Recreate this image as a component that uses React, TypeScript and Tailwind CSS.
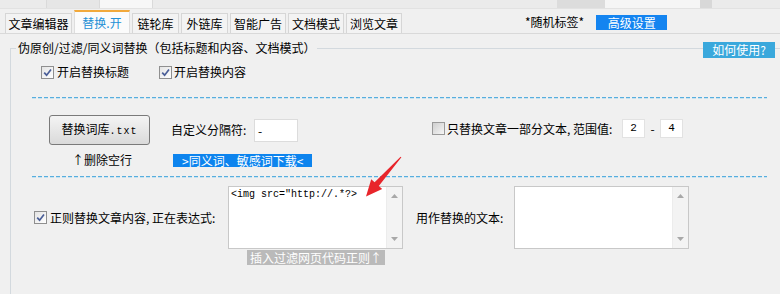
import React from 'react';

const Check = ({ checked }: { checked?: boolean }) => (
  <span
    className={`w-[13px] h-[13px] shrink-0 flex items-center justify-center border ${
      checked ? 'border-[#8f8f8f] bg-linear-to-br from-[#e4e4e4] to-white' : 'border-[#9a9a9a] bg-linear-to-br from-[#cfcfcf] to-[#f6f6f6]'
    }`}
  >
    {checked && (
      <svg width="9" height="9" viewBox="0 0 9 9">
        <path d="M1.2 4.6 L3.6 7.2 L8 1.4" stroke="#4b5f98" strokeWidth="1.7" fill="none" />
      </svg>
    )}
  </span>
);

const Dashed = ({ className }: { className: string }) => (
  <div className={`${className} ml-[21px] w-[735px] h-[2px] flex flex-col`}>
    <div className="h-px bg-[repeating-linear-gradient(90deg,#58aede_0_4px,transparent_4px_6px)]" />
    <div className="h-px bg-[repeating-linear-gradient(90deg,#c6e2f0_0_4px,transparent_4px_6px)]" />
  </div>
);

const TextBox = ({ text }: { text?: string }) => (
  <div className="w-[175px] h-[63px] flex bg-white border border-[#c8c8c8]">
    <div className="flex-1 px-[2px] pt-[1px] font-['Liberation_Mono',monospace] text-[10px] leading-[13px] text-black whitespace-pre">
      {text}
    </div>
    <div className="w-[16px] bg-[#f3f3f3] border-l border-[#ececec] flex flex-col items-center justify-between py-[7px]">
      <svg width="7" height="4" viewBox="0 0 7 4"><path d="M0 4 L3.5 0 L7 4 Z" fill="#a8a8a8" /></svg>
      <svg width="7" height="4" viewBox="0 0 7 4"><path d="M0 0 L3.5 4 L7 0 Z" fill="#a8a8a8" /></svg>
    </div>
  </div>
);

const tabs = [
  { label: '文章编辑器', w: 'w-[67px]' },
  { label: '替换.开', w: 'w-[56px]', active: true },
  { label: '链轮库', w: 'w-[47px]' },
  { label: '外链库', w: 'w-[47px]' },
  { label: '智能广告', w: 'w-[56px]' },
  { label: '文档模式', w: 'w-[56px]' },
  { label: '浏览文章', w: 'w-[56px]' },
];

export default function App() {
  return (
    <div className="relative w-[780px] h-[294px] overflow-hidden bg-[#f0f0f0] text-black text-[12px] font-['Noto_Sans_CJK_SC',sans-serif]">
      {/* top strip from the window above */}
      <div className="h-[9px] flex bg-[#ebebeb] border-b border-[#e2e2e2]">
        <div className="w-[47px] border-r border-[#dadada]" />
        <div className="w-[53px] bg-[#e6e6e6] border-r border-[#dadada]" />
        <div className="w-[53px] bg-[#f7f7f7] border-r border-[#dadada]" />
        <div className="w-[404px]" />
        <div className="w-[48px] bg-[#dcdcdc]" />
        <div className="w-[95px] bg-[#f5f5f5]" />
        <div className="w-[12px] bg-[#d8d8d8]" />
      </div>

      {/* tab row */}
      <div className="h-[25px] flex items-end border-b border-[#d9d9d9]">
        <div className="flex items-end gap-[2px] pl-[5px]">
          {tabs.map(t =>
            t.active ? (
              <div
                key={t.label}
                className={`${t.w} h-[23px] flex items-center justify-center bg-[#fbfbfb] border-t-2 border-[#f2a93b] border-x border-x-[#dedede] text-[#2390d6] leading-[16px]`}
              >
                {t.label}
              </div>
            ) : (
              <div
                key={t.label}
                className={`${t.w} h-[20px] flex items-center justify-center bg-[#f3f3f3] border border-b-0 border-[#d6d6d6] leading-[16px]`}
              >
                {t.label}
              </div>
            )
          )}
        </div>
        <div className="flex items-center h-[20px] mb-[1px]">
          <span className="ml-[123px] leading-[16px]">*随机标签*</span>
          <span className="ml-[12px] w-[71px] h-[15px] bg-[#1484f0] text-white flex items-center justify-center leading-[15px]">
            高级设置
          </span>
        </div>
      </div>

      {/* group box */}
      <fieldset className="mt-[6px] ml-[10px] w-[790px] h-[260px] border border-[#d3d9de] p-0">
        <legend className="ml-[5px] px-[2px] leading-[16px]">伪原创/过滤/同义词替换（包括标题和内容、文档模式）</legend>

        {/* row 1 */}
        <div className="mt-[8px] h-[16px] flex items-center pl-[30px]">
          <Check checked />
          <span className="ml-[3px] leading-[16px]">开启替换标题</span>
          <span className="ml-[30px] flex items-center">
            <Check checked />
            <span className="ml-[2px] leading-[16px]">开启替换内容</span>
          </span>
        </div>

        <Dashed className="mt-[17px]" />

        {/* row 2 */}
        <div className="mt-[16px] h-[30px] flex items-center">
          <button className="ml-[38px] w-[101px] h-[30px] rounded-[3px] border border-[#7a7a7a] bg-linear-to-b from-[#f4f4f4] to-[#dadada] flex items-center justify-center">
            <span className="leading-[16px]">
              替换词库<span className="font-['Liberation_Mono',monospace] text-[10px] tracking-[1px] align-baseline">.txt</span>
            </span>
          </button>
          <span className="ml-[21px] w-[83px] leading-[16px]">自定义分隔符:</span>
          <div className="w-[44px] h-[23px] bg-white border border-[#dcdcdc] pl-[3px] leading-[21px]">-</div>
          <span className="ml-[134px] flex items-center -mt-[3px]">
            <Check />
            <span className="ml-[2px] w-[175px] leading-[16px]">只替换文章一部分文本, 范围值:</span>
            <span className="w-[23px] h-[19px] bg-white border border-[#e2e2e2] flex items-center justify-center font-['Liberation_Mono',monospace] text-[11px]">2</span>
            <span className="w-[15px] text-center">-</span>
            <span className="w-[23px] h-[19px] bg-white border border-[#e2e2e2] flex items-center justify-center font-['Liberation_Mono',monospace] text-[11px]">4</span>
          </span>
        </div>

        {/* row 3 */}
        <div className="mt-[7px] h-[16px] flex items-center">
          <span className="ml-[61px] leading-[16px]">↑删除空行</span>
          <span className="ml-[41px] h-[13px] px-[9px] bg-[#0d84ee] text-white leading-[13px]">&gt;同义词、敏感词下载&lt;</span>
        </div>

        <Dashed className="mt-[8px]" />

        {/* row 4 */}
        <div className="mt-[8px] flex items-start">
          <div className="h-[63px] flex items-center ml-[23px]">
            <Check checked />
            <span className="ml-[3px] w-[178px] leading-[16px]">正则替换文章内容, 正在表达式:</span>
          </div>
          <div className="flex flex-col">
            <TextBox text={'<img src="http://.*?>'} />
            <span className="ml-[19px] mt-[1px] w-[138px] h-[15px] bg-[#bababa] text-white leading-[15px] text-center">
              插入过滤网页代码正则↑
            </span>
          </div>
          <div className="h-[63px] flex items-center ml-[13px] w-[98px] leading-[16px]">用作替换的文本:</div>
          <TextBox />
        </div>
      </fieldset>

      <span className="absolute left-[703px] top-[42px] w-[72px] h-[16px] bg-[#3aa8dc] text-white flex items-center justify-center leading-[16px]">
        如何使用?
      </span>

      <svg className="absolute left-0 top-0 pointer-events-none" width="780" height="294">
        <polygon
          points="401.4,157.3 378.8,185.9 382.2,189 366,196.5 371.2,179.2 374.6,182.3 400.6,156.7"
          fill="#e8252b"
        />
      </svg>
    </div>
  );
}
